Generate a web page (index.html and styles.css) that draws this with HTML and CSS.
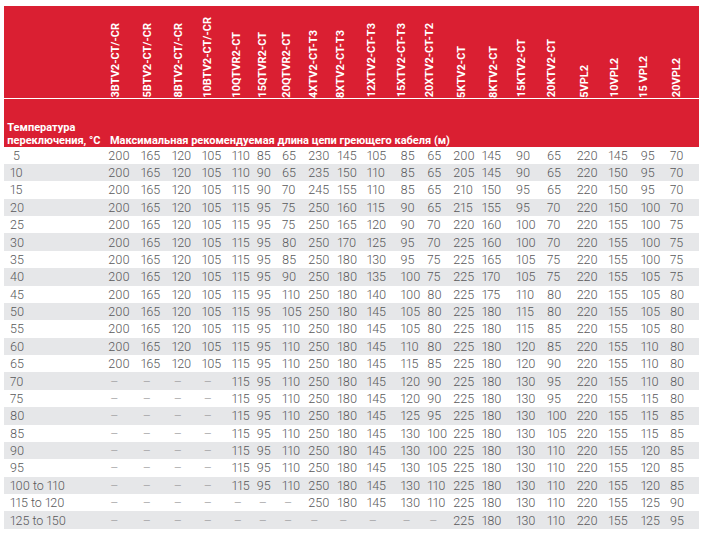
FILE: index.html
```html
<!DOCTYPE html>
<html lang="ru">
<head>
<meta charset="utf-8">
<title>Максимальная длина цепи</title>
<link rel="stylesheet" href="styles.css">
</head>
<body>
<table class="chart">
  <colgroup>
    <col class="c0"><col class="c1"><col class="c2"><col class="c3"><col class="c4"><col class="c5"><col class="c6"><col class="c7"><col class="c8"><col class="c9"><col class="c10"><col class="c11"><col class="c12"><col class="c13"><col class="c14"><col class="c15"><col class="c16"><col class="c17"><col class="c18"><col class="c19"><col class="c20">
  </colgroup>
  <thead>
    <tr class="models-row">
      <th colspan="21">
        <div class="models">
          <span class="m">3BTV2-CT/-CR</span>
          <span class="m">5BTV2-CT/-CR</span>
          <span class="m">8BTV2-CT/-CR</span>
          <span class="m">10BTV2-CT/-CR</span>
          <span class="m">10QTVR2-CT</span>
          <span class="m">15QTVR2-CT</span>
          <span class="m">20QTVR2-CT</span>
          <span class="m">4XTV2-CT-T3</span>
          <span class="m">8XTV2-CT-T3</span>
          <span class="m">12XTV2-CT-T3</span>
          <span class="m">15XTV2-CT-T3</span>
          <span class="m">20XTV2-CT-T2</span>
          <span class="m">5KTV2-CT</span>
          <span class="m">8KTV2-CT</span>
          <span class="m">15KTV2-CT</span>
          <span class="m">20KTV2-CT</span>
          <span class="m">5VPL2</span>
          <span class="m">10VPL2</span>
          <span class="m">15 VPL2</span>
          <span class="m">20VPL2</span>
        </div>
      </th>
    </tr>
    <tr class="caption-row">
      <th class="temp">Температура<br>переключения, °C</th>
      <th class="max" colspan="20">Максимальная рекомендуемая длина цепи греющего кабеля (м)</th>
    </tr>
  </thead>
  <tbody>
    <tr><td class="ind">5</td><td>200</td><td>165</td><td>120</td><td>105</td><td>110</td><td>85</td><td>65</td><td>230</td><td>145</td><td>105</td><td>85</td><td>65</td><td>200</td><td>145</td><td>90</td><td>65</td><td>220</td><td>145</td><td>95</td><td>70</td></tr>
    <tr><td>10</td><td>200</td><td>165</td><td>120</td><td>105</td><td>110</td><td>90</td><td>65</td><td>235</td><td>150</td><td>110</td><td>85</td><td>65</td><td>205</td><td>145</td><td>90</td><td>65</td><td>220</td><td>150</td><td>95</td><td>70</td></tr>
    <tr><td>15</td><td>200</td><td>165</td><td>120</td><td>105</td><td>115</td><td>90</td><td>70</td><td>245</td><td>155</td><td>110</td><td>85</td><td>65</td><td>210</td><td>150</td><td>95</td><td>65</td><td>220</td><td>150</td><td>95</td><td>70</td></tr>
    <tr><td>20</td><td>200</td><td>165</td><td>120</td><td>105</td><td>115</td><td>95</td><td>75</td><td>250</td><td>160</td><td>115</td><td>90</td><td>65</td><td>215</td><td>155</td><td>95</td><td>70</td><td>220</td><td>150</td><td>100</td><td>70</td></tr>
    <tr><td>25</td><td>200</td><td>165</td><td>120</td><td>105</td><td>115</td><td>95</td><td>75</td><td>250</td><td>165</td><td>120</td><td>90</td><td>70</td><td>220</td><td>160</td><td>100</td><td>70</td><td>220</td><td>155</td><td>100</td><td>75</td></tr>
    <tr><td>30</td><td>200</td><td>165</td><td>120</td><td>105</td><td>115</td><td>95</td><td>80</td><td>250</td><td>170</td><td>125</td><td>95</td><td>70</td><td>225</td><td>160</td><td>100</td><td>70</td><td>220</td><td>155</td><td>100</td><td>75</td></tr>
    <tr><td>35</td><td>200</td><td>165</td><td>120</td><td>105</td><td>115</td><td>95</td><td>85</td><td>250</td><td>180</td><td>130</td><td>95</td><td>75</td><td>225</td><td>165</td><td>105</td><td>75</td><td>220</td><td>155</td><td>100</td><td>75</td></tr>
    <tr><td>40</td><td>200</td><td>165</td><td>120</td><td>105</td><td>115</td><td>95</td><td>90</td><td>250</td><td>180</td><td>135</td><td>100</td><td>75</td><td>225</td><td>170</td><td>105</td><td>75</td><td>220</td><td>155</td><td>105</td><td>75</td></tr>
    <tr><td>45</td><td>200</td><td>165</td><td>120</td><td>105</td><td>115</td><td>95</td><td>110</td><td>250</td><td>180</td><td>140</td><td>100</td><td>80</td><td>225</td><td>175</td><td>110</td><td>80</td><td>220</td><td>155</td><td>105</td><td>80</td></tr>
    <tr><td>50</td><td>200</td><td>165</td><td>120</td><td>105</td><td>115</td><td>95</td><td>105</td><td>250</td><td>180</td><td>145</td><td>105</td><td>80</td><td>225</td><td>180</td><td>115</td><td>80</td><td>220</td><td>155</td><td>105</td><td>80</td></tr>
    <tr><td>55</td><td>200</td><td>165</td><td>120</td><td>105</td><td>115</td><td>95</td><td>110</td><td>250</td><td>180</td><td>145</td><td>105</td><td>80</td><td>225</td><td>180</td><td>115</td><td>85</td><td>220</td><td>155</td><td>105</td><td>80</td></tr>
    <tr><td>60</td><td>200</td><td>165</td><td>120</td><td>105</td><td>115</td><td>95</td><td>110</td><td>250</td><td>180</td><td>145</td><td>110</td><td>80</td><td>225</td><td>180</td><td>120</td><td>85</td><td>220</td><td>155</td><td>110</td><td>80</td></tr>
    <tr><td>65</td><td>200</td><td>165</td><td>120</td><td>105</td><td>115</td><td>95</td><td>110</td><td>250</td><td>180</td><td>145</td><td>115</td><td>85</td><td>225</td><td>180</td><td>120</td><td>90</td><td>220</td><td>155</td><td>110</td><td>80</td></tr>
    <tr><td>70</td><td class="dash">–</td><td class="dash">–</td><td class="dash">–</td><td class="dash">–</td><td>115</td><td>95</td><td>110</td><td>250</td><td>180</td><td>145</td><td>120</td><td>90</td><td>225</td><td>180</td><td>130</td><td>95</td><td>220</td><td>155</td><td>110</td><td>80</td></tr>
    <tr><td>75</td><td class="dash">–</td><td class="dash">–</td><td class="dash">–</td><td class="dash">–</td><td>115</td><td>95</td><td>110</td><td>250</td><td>180</td><td>145</td><td>120</td><td>90</td><td>225</td><td>180</td><td>130</td><td>95</td><td>220</td><td>155</td><td>115</td><td>80</td></tr>
    <tr><td>80</td><td class="dash">–</td><td class="dash">–</td><td class="dash">–</td><td class="dash">–</td><td>115</td><td>95</td><td>110</td><td>250</td><td>180</td><td>145</td><td>125</td><td>95</td><td>225</td><td>180</td><td>130</td><td>100</td><td>220</td><td>155</td><td>115</td><td>85</td></tr>
    <tr><td>85</td><td class="dash">–</td><td class="dash">–</td><td class="dash">–</td><td class="dash">–</td><td>115</td><td>95</td><td>110</td><td>250</td><td>180</td><td>145</td><td>130</td><td>100</td><td>225</td><td>180</td><td>130</td><td>105</td><td>220</td><td>155</td><td>115</td><td>85</td></tr>
    <tr><td>90</td><td class="dash">–</td><td class="dash">–</td><td class="dash">–</td><td class="dash">–</td><td>115</td><td>95</td><td>110</td><td>250</td><td>180</td><td>145</td><td>130</td><td>100</td><td>225</td><td>180</td><td>130</td><td>110</td><td>220</td><td>155</td><td>120</td><td>85</td></tr>
    <tr><td>95</td><td class="dash">–</td><td class="dash">–</td><td class="dash">–</td><td class="dash">–</td><td>115</td><td>95</td><td>110</td><td>250</td><td>180</td><td>145</td><td>130</td><td>105</td><td>225</td><td>180</td><td>130</td><td>110</td><td>220</td><td>155</td><td>120</td><td>85</td></tr>
    <tr><td>100 to 110</td><td class="dash">–</td><td class="dash">–</td><td class="dash">–</td><td class="dash">–</td><td>115</td><td>95</td><td>110</td><td>250</td><td>180</td><td>145</td><td>130</td><td>110</td><td>225</td><td>180</td><td>130</td><td>110</td><td>220</td><td>155</td><td>120</td><td>85</td></tr>
    <tr><td>115 to 120</td><td class="dash">–</td><td class="dash">–</td><td class="dash">–</td><td class="dash">–</td><td class="dash">–</td><td class="dash">–</td><td class="dash">–</td><td>250</td><td>180</td><td>145</td><td>130</td><td>110</td><td>225</td><td>180</td><td>130</td><td>110</td><td>220</td><td>155</td><td>125</td><td>90</td></tr>
    <tr><td>125 to 150</td><td class="dash">–</td><td class="dash">–</td><td class="dash">–</td><td class="dash">–</td><td class="dash">–</td><td class="dash">–</td><td class="dash">–</td><td class="dash">–</td><td class="dash">–</td><td class="dash">–</td><td class="dash">–</td><td class="dash">–</td><td>225</td><td>180</td><td>130</td><td>110</td><td>220</td><td>155</td><td>125</td><td>95</td></tr>
  </tbody>
</table>
</body>
</html>
```

FILE: styles.css
```css
* {
  box-sizing: border-box;
}

body {
  margin: 0;
  padding: 6px 4px 0;
  background: #ffffff;
  font-family: Roboto, "Liberation Sans", sans-serif;
}

.chart {
  width: 695px;
  table-layout: fixed;
  border-collapse: collapse;
  border-spacing: 0;
}

.c0 { width: 104.3px; }
.c1 { width: 32.4px; }
.c2 { width: 31px; }
.c3 { width: 30px; }
.c4 { width: 30px; }
.c5 { width: 25px; }
.c6 { width: 25.3px; }
.c7 { width: 26.3px; }
.c8 { width: 29px; }
.c9 { width: 29.4px; }
.c10 { width: 33.8px; }
.c11 { width: 26.8px; }
.c12 { width: 26px; }
.c13 { width: 28.4px; }
.c14 { width: 34.3px; }
.c15 { width: 31px; }
.c16 { width: 29.7px; }
.c17 { width: 31.6px; }
.c18 { width: 32.4px; }
.c19 { width: 29.3px; }
.c20 { width: 29px; }

.chart thead th {
  background: #da1f32;
  color: #ffffff;
  font-weight: 700;
  padding: 0;
  text-align: left;
}

.models-row th {
  height: 92px;
  vertical-align: bottom;
  border-bottom: 1px solid #ffffff;
  padding-bottom: 3px;
}

.models {
  display: grid;
  grid-template-columns: 96px 31px 32px 31.4px 26.8px 31px 21.6px 26.4px 27px 27.6px 33.8px 26.2px 30.4px 33px 30.2px 26.6px 33.4px 33.2px 26.8px 29.8px 37px;
  align-items: end;
}

.models .m {
  justify-self: center;
  writing-mode: vertical-rl;
  transform: rotate(180deg);
  font-size: 11px;
  line-height: 11px;
  white-space: nowrap;
}

.models .m:first-child {
  grid-column-start: 2;
}

.caption-row th {
  height: 48.5px;
  vertical-align: bottom;
  font-size: 11px;
  line-height: 13px;
  padding-bottom: 3.5px;
  white-space: nowrap;
}

.caption-row .temp {
  padding-left: 3.3px;
}

.caption-row .max {
  padding-left: 1.7px;
}

.chart tbody td {
  height: 17.39px;
  padding: 0;
  font-size: 12.5px;
  font-weight: 300;
  font-variant-numeric: proportional-nums;
  line-height: 17px;
  color: #58585a;
  white-space: nowrap;
  vertical-align: middle;
}

.chart tbody tr:nth-child(even) {
  background: #e6e7e9;
}

.chart tbody td:first-child {
  padding-left: 6px;
}

.chart tbody td.ind {
  padding-left: 9px;
}

.chart tbody td.dash {
  color: #9b9b9d;
  padding-left: 2px;
}
```
